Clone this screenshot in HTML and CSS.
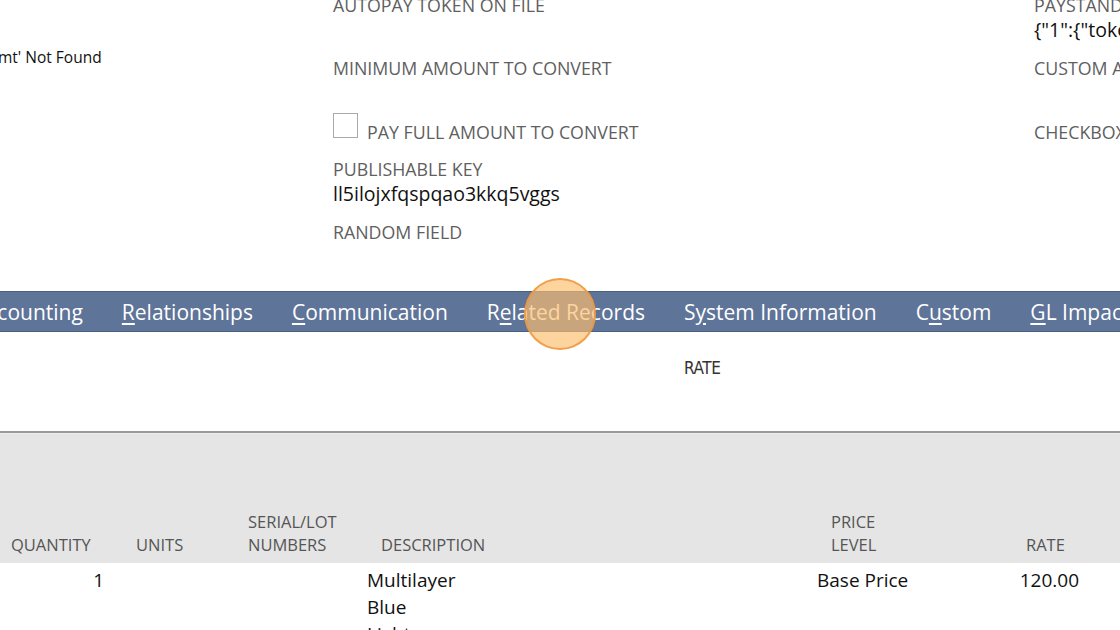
FILE: index.html
```html
<!DOCTYPE html>
<html lang="en">
<head>
  <meta charset="UTF-8">
  <title>Invoice</title>
  <link rel="stylesheet" href="styles.css">
</head>
<body>
  <div class="page">
    <div class="main-fields">
      <div class="col col-left">
        <div class="value">mt' Not Found</div>
      </div>
      <div class="col col-mid">
        <div class="field">
          <div class="label">AUTOPAY TOKEN ON FILE</div>
          <div class="value"></div>
        </div>
        <div class="field short">
          <div class="label">MINIMUM AMOUNT TO CONVERT</div>
        </div>
        <div class="check-row">
          <span class="checkbox"></span>
          <span class="label">PAY FULL AMOUNT TO CONVERT</span>
        </div>
        <div class="field">
          <div class="label">PUBLISHABLE KEY</div>
          <div class="value">ll5ilojxfqspqao3kkq5vggs</div>
        </div>
        <div class="field">
          <div class="label">RANDOM FIELD</div>
          <div class="value"></div>
        </div>
      </div>
      <div class="col col-right">
        <div class="field">
          <div class="label">PAYSTAND AUTOPAY TOKENS</div>
          <div class="value">{"1":{"token":"tok_1"}}</div>
        </div>
        <div class="field short">
          <div class="label">CUSTOM AMOUNT</div>
        </div>
        <div class="check-row">
          <span class="label">CHECKBOX</span>
        </div>
      </div>
    </div>

    <div class="tabs">
      <span class="tab first">Accounting</span>
      <span class="tab"><u>R</u>elationships</span>
      <span class="tab"><u>C</u>ommunication</span>
      <span class="tab">R<u>e</u>lated Records</span>
      <span class="tab">S<u>y</u>stem Information</span>
      <span class="tab">C<u>u</u>stom</span>
      <span class="tab"><u>G</u>L Impact</span>
    </div>

    <div class="subtab-area">
      <div class="rate-label">RATE</div>
    </div>

    <table class="items">
      <colgroup>
        <col style="width:116px">
        <col style="width:121px">
        <col style="width:119px">
        <col style="width:450px">
        <col style="width:201px">
        <col style="width:113px">
      </colgroup>
      <thead>
        <tr>
          <th class="h-qty">QUANTITY</th>
          <th class="h-units">UNITS</th>
          <th class="h-serial">SERIAL/LOT<br>NUMBERS</th>
          <th class="h-desc">DESCRIPTION</th>
          <th class="h-price">PRICE<br>LEVEL</th>
          <th class="h-rate">RATE</th>
        </tr>
      </thead>
      <tbody>
        <tr>
          <td class="num">1</td>
          <td></td>
          <td></td>
          <td class="desc">Multilayer<br>Blue<br>Light</td>
          <td class="price">Base Price</td>
          <td class="num rate">120.00</td>
        </tr>
      </tbody>
    </table>

    <div class="click-marker"></div>
  </div>
</body>
</html>
```

FILE: styles.css
```css
body {
  margin: 0;
  background: #fff;
  font-family: "Open Sans", "Liberation Sans", sans-serif;
  overflow: hidden;
  width: 1120px;
  height: 630px;
}

.page {
  position: relative;
  margin-top: -7px;
}

.main-fields {
  display: flex;
  height: 298px;
}

.col-left {
  width: 333px;
  padding-top: 53px;
}

.col-left .value {
  font-size: 15.5px;
  line-height: 22px;
  margin-left: -2px;
  color: #111;
}

.col-mid {
  width: 701px;
}

.col-right {
  flex: 1;
  white-space: nowrap;
  overflow: hidden;
}

.label {
  font-size: 17.8px;
  line-height: 24px;
  color: #5f5f5f;
  white-space: nowrap;
}

.value {
  font-size: 19.5px;
  line-height: 26px;
  min-height: 26px;
  color: #111;
  white-space: nowrap;
}

.field {
  margin-bottom: 13px;
}

.field.short {
  height: 50px;
  margin-bottom: 0;
}

.check-row {
  display: flex;
  align-items: flex-end;
  height: 38px;
  margin-bottom: 13px;
}

.checkbox {
  width: 23px;
  height: 23px;
  border: 1px solid #aaa;
  margin-bottom: 6px;
  margin-right: 9px;
  background: #fff;
}

.tabs {
  display: flex;
  gap: 39px;
  height: 39px;
  align-items: center;
  background: #5e7498;
  border-top: 1px solid #4a5e80;
  border-bottom: 1px solid #4a5e80;
  white-space: nowrap;
  overflow: hidden;
}

.tab {
  color: #fff;
  font-size: 21px;
  line-height: 26px;
}

.tab.first {
  margin-left: -26px;
}

.tab u {
  text-underline-offset: 3px;
}

.subtab-area {
  height: 99px;
  border-bottom: 2px solid #9a9a9a;
}

.rate-label {
  font-family: "DejaVu Sans", sans-serif;
  font-stretch: condensed;
  font-size: 17px;
  line-height: 22px;
  padding-top: 25px;
  padding-left: 684px;
  color: #333;
  letter-spacing: -0.4px;
}

.items {
  width: 1120px;
  border-collapse: collapse;
  table-layout: fixed;
}

.items th {
  background: #e5e5e5;
  border-top: 1px solid #ededed;
  height: 122px;
  vertical-align: bottom;
  text-align: left;
  font-weight: normal;
  font-size: 16.5px;
  line-height: 23px;
  color: #555;
  padding: 0 0 7px 0;
  white-space: nowrap;
}

.h-qty { padding-left: 11px !important; }
.h-units { padding-left: 20px !important; }
.h-serial { padding-left: 11px !important; }
.h-desc { padding-left: 25px !important; }
.h-price { padding-left: 25px !important; }
.h-rate { padding-left: 19px !important; }

.items td {
  vertical-align: top;
  font-size: 19px;
  line-height: 27px;
  color: #111;
  padding: 4px 0 0 11px;
}

.items td.num {
  text-align: right;
  padding-right: 12px;
  padding-left: 0;
}

.items td.rate {
  padding-right: 41px;
}

.click-marker {
  position: absolute;
  left: 524px;
  top: 285px;
  width: 68px;
  height: 68px;
  border-radius: 50%;
  background: rgba(252, 190, 110, 0.67);
  border: 2px solid rgba(240, 150, 60, 0.85);
}
```
